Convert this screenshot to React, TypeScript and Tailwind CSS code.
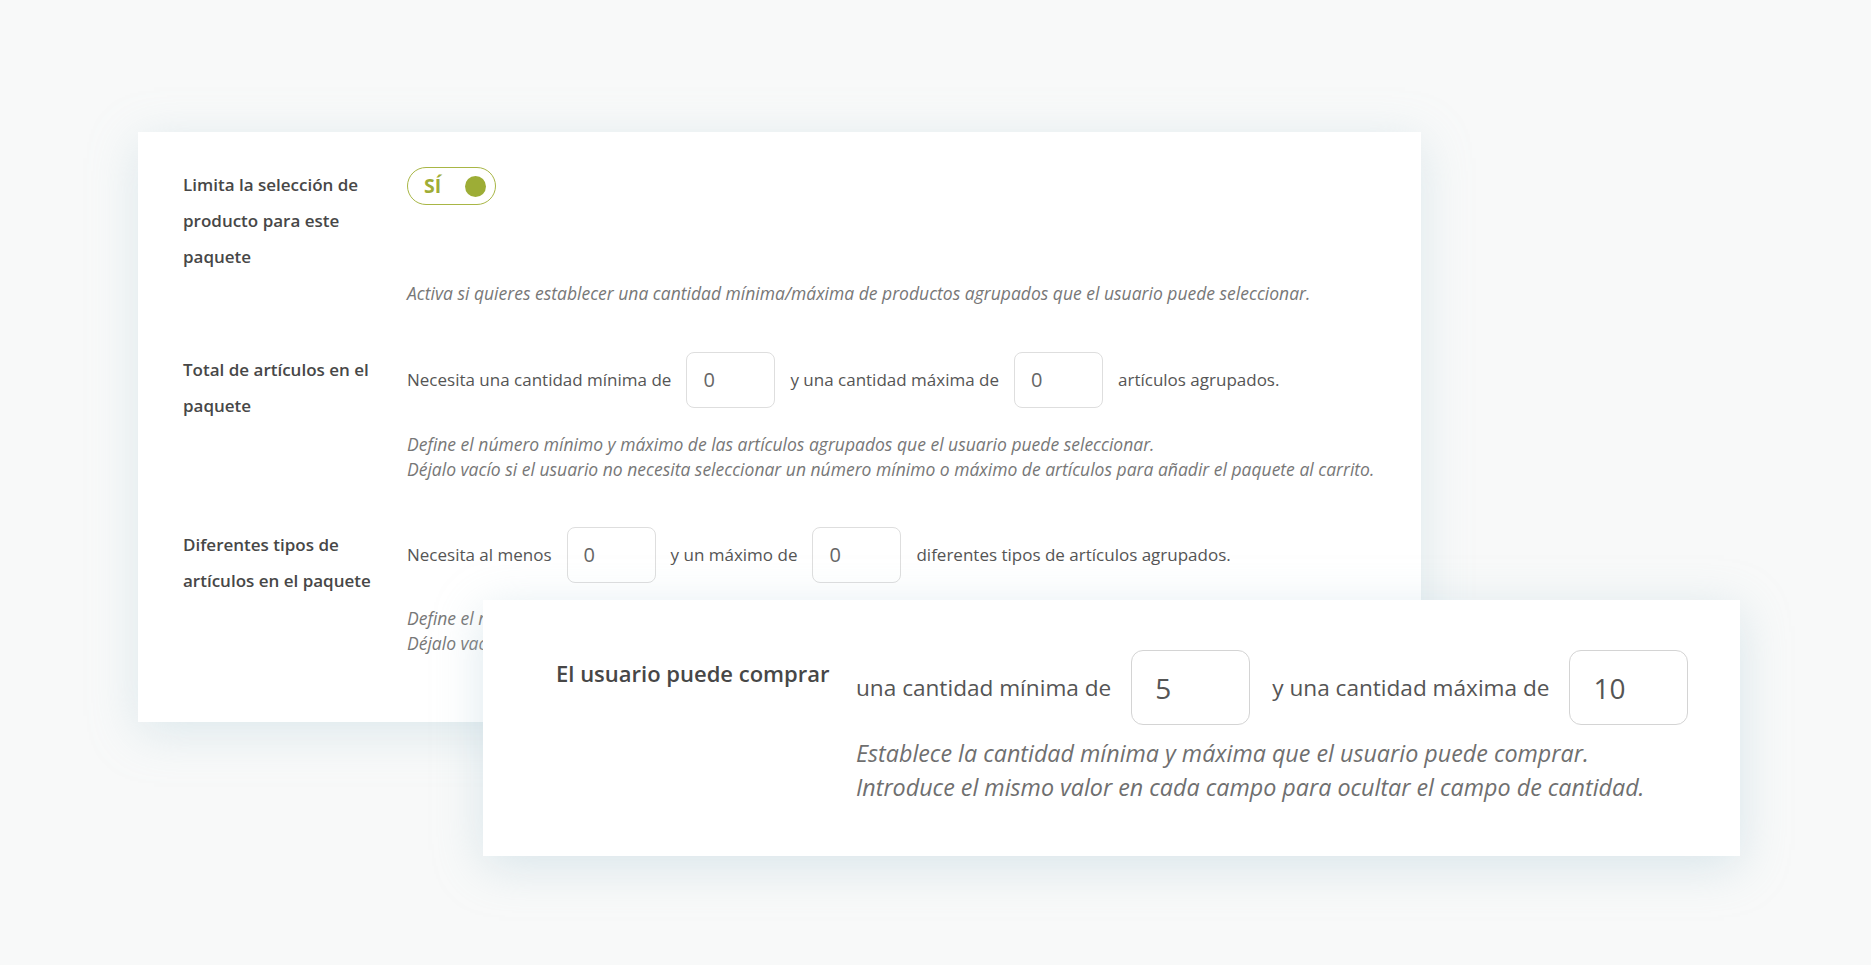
import React from "react";

const font = { fontFamily: '"Open Sans", "Noto Sans", sans-serif' };

function SmallInput({ value }: { value: string }) {
  return (
    <div className="flex h-[56px] w-[89px] shrink-0 items-center rounded-[8px] border border-[#dedede] bg-white pl-[16px] text-[20px] text-[#666]">
      {value}
    </div>
  );
}

function BigInput({ value }: { value: string }) {
  return (
    <div className="flex h-[75px] w-[119px] shrink-0 items-center rounded-[12px] border-[1.5px] border-[#d4d4d4] bg-white pl-[23px] text-[28px] text-[#555]">
      {value}
    </div>
  );
}

export default function App() {
  return (
    <div className="relative h-[965px] w-full overflow-hidden bg-[#f8f9f9]" style={font}>
      {/* Card 1 */}
      <div className="ml-[138px] pt-[132px]">
        <div className="h-[590px] w-[1283px] bg-white pl-[45px] pt-[35px] shadow-[0_10px_45px_rgba(170,200,212,0.35)]">
          {/* Row 1 */}
          <div className="flex">
            <div className="w-[224px] shrink-0 text-[17px] font-semibold leading-[36px] text-[#474747]">
              Limita la selección de
              <br />
              producto para este
              <br />
              paquete
            </div>
            <div className="flex flex-col">
              <div className="relative flex h-[38px] w-[89px] items-center rounded-full border border-[#a8b645] bg-white pl-[16px]">
                <span className="text-[19.5px] font-bold leading-none text-[#9fad36]">SÍ</span>
                <span className="absolute right-[9px] top-[8px] h-[21px] w-[21px] rounded-full bg-[#9dad36]" />
              </div>
            </div>
          </div>
          <div className="ml-[224px] mt-[6px] text-[17.5px] italic leading-[25px] text-[#777]">
            Activa si quieres establecer una cantidad mínima/máxima de productos agrupados que el usuario puede seleccionar.
          </div>

          {/* Row 2 */}
          <div className="mt-[46px] flex">
            <div className="w-[224px] shrink-0 text-[17px] font-semibold leading-[36px] text-[#474747]">
              Total de artículos en el
              <br />
              paquete
            </div>
            <div className="flex flex-col">
              <div className="flex items-center gap-[15px] text-[17px] text-[#555]">
                <span>Necesita una cantidad mínima de</span>
                <SmallInput value="0" />
                <span>y una cantidad máxima de</span>
                <SmallInput value="0" />
                <span>artículos agrupados.</span>
              </div>
              <div className="mt-[24px] text-[17.5px] italic leading-[25px] text-[#777]">
                Define el número mínimo y máximo de las artículos agrupados que el usuario puede seleccionar.
                <br />
                Déjalo vacío si el usuario no necesita seleccionar un número mínimo o máximo de artículos para añadir el paquete al carrito.
              </div>
            </div>
          </div>

          {/* Row 3 */}
          <div className="mt-[45px] flex">
            <div className="w-[224px] shrink-0 text-[17px] font-semibold leading-[36px] text-[#474747]">
              Diferentes tipos de
              <br />
              artículos en el paquete
            </div>
            <div className="flex flex-col">
              <div className="flex items-center gap-[15px] text-[17px] text-[#555]">
                <span>Necesita al menos</span>
                <SmallInput value="0" />
                <span>y un máximo de</span>
                <SmallInput value="0" />
                <span>diferentes tipos de artículos agrupados.</span>
              </div>
              <div className="mt-[23px] text-[17.5px] italic leading-[25px] text-[#777]">
                Define el número mínimo y máximo de diferentes tipos de artículos que el usuario puede seleccionar.
                <br />
                Déjalo vacío si el usuario no necesita seleccionar un número mínimo o máximo de tipos de artículos.
              </div>
            </div>
          </div>
        </div>
      </div>

      {/* Card 2 (floating over card 1) */}
      <div className="absolute left-[483px] top-[600px] h-[256px] w-[1257px] bg-white pl-[73px] pt-[50px] shadow-[0_10px_45px_rgba(170,200,212,0.4)]">
        <div className="flex">
          <div className="w-[300px] shrink-0 pt-[8px] text-[22px] font-semibold leading-[30px] text-[#474747]">
            El usuario puede comprar
          </div>
          <div className="flex flex-col">
            <div className="flex items-center text-[22.6px] text-[#555]">
              <span>una cantidad mínima de</span>
              <div className="ml-[20px] mr-[22px]">
                <BigInput value="5" />
              </div>
              <span>y una cantidad máxima de</span>
              <div className="ml-[20px]">
                <BigInput value="10" />
              </div>
            </div>
            <div className="mt-[11px] text-[23.3px] italic leading-[34px] text-[#6f6f6f]">
              Establece la cantidad mínima y máxima que el usuario puede comprar.
              <br />
              Introduce el mismo valor en cada campo para ocultar el campo de cantidad.
            </div>
          </div>
        </div>
      </div>
    </div>
  );
}
